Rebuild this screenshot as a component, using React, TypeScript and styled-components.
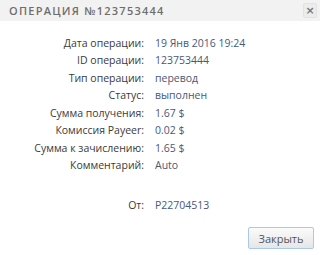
import React from "react";
import styled, { createGlobalStyle } from "styled-components";

const GlobalStyle = createGlobalStyle`
  html, body {
    margin: 0;
    padding: 0;
    background: #ffffff;
  }
  body {
    font-family: "Open Sans", "Liberation Sans", sans-serif;
  }
`;

const Dialog = styled.div`
  width: 320px;
  height: 255px;
  display: flex;
  flex-direction: column;
  background: #fff;
`;

const Header = styled.div`
  height: 21px;
  display: flex;
  align-items: center;
  justify-content: space-between;
  padding: 0 3px 0 9px;
  background: #f2f2f2;
`;

const Title = styled.div`
  font-size: 11px;
  font-weight: 600;
  letter-spacing: 1.25px;
  color: #6e6e6e;
`;

const CloseIcon = styled.button`
  width: 14px;
  height: 15px;
  padding: 0;
  border: 1px solid #e2e2e2;
  border-radius: 2px;
  background: #ececec;
  color: #777;
  font-size: 11px;
  font-weight: 700;
  line-height: 12px;
  font-family: "DejaVu Sans", sans-serif;
  display: flex;
  align-items: center;
  justify-content: center;
`;

const Body = styled.div`
  padding-top: 13px;
`;

const Details = styled.div`
  display: grid;
  grid-template-columns: 144px 1fr;
  column-gap: 11px;
  grid-auto-rows: minmax(17.5px, auto);
  align-items: center;
  font-size: 10.5px;
`;

const Label = styled.div`
  text-align: right;
  color: #3a3a3a;
`;

const Value = styled.div`
  color: #4a5878;
`;

const Spacer = styled.div<{ $h: number }>`
  grid-column: 1 / -1;
  height: ${(p) => p.$h}px;
`;

const Footer = styled.div`
  display: flex;
  justify-content: flex-end;
  padding: 13px 6px 0 0;
`;

const CloseButton = styled.button`
  width: 66px;
  height: 22px;
  border: 1px solid #a9c8ee;
  border-radius: 2px;
  background: linear-gradient(#fbfbfb, #e6e6e6);
  color: #555;
  font-family: "Open Sans", "Liberation Sans", sans-serif;
  font-size: 11px;
  padding: 0;
`;

const rows: [string, string][] = [
  ["Дата операции:", "19 Янв 2016 19:24"],
  ["ID операции:", "123753444"],
  ["Тип операции:", "перевод"],
  ["Статус:", "выполнен"],
  ["Сумма получения:", "1.67 $"],
  ["Комиссия Payeer:", "0.02 $"],
  ["Сумма к зачислению:", "1.65 $"],
  ["Комментарий:", "Auto"],
];

const App: React.FC = () => {
  return (
    <Dialog>
      <GlobalStyle />
      <Header>
        <Title>ОПЕРАЦИЯ №123753444</Title>
        <CloseIcon type="button">×</CloseIcon>
      </Header>
      <Body>
        <Details>
          {rows.map(([label, value]) => (
            <React.Fragment key={label}>
              <Label>{label}</Label>
              <Value>{value}</Value>
            </React.Fragment>
          ))}
          <Spacer $h={22.5} />
          <Label>От:</Label>
          <Value>P22704513</Value>
        </Details>
      </Body>
      <Footer>
        <CloseButton type="button">Закрыть</CloseButton>
      </Footer>
    </Dialog>
  );
};

export default App;
